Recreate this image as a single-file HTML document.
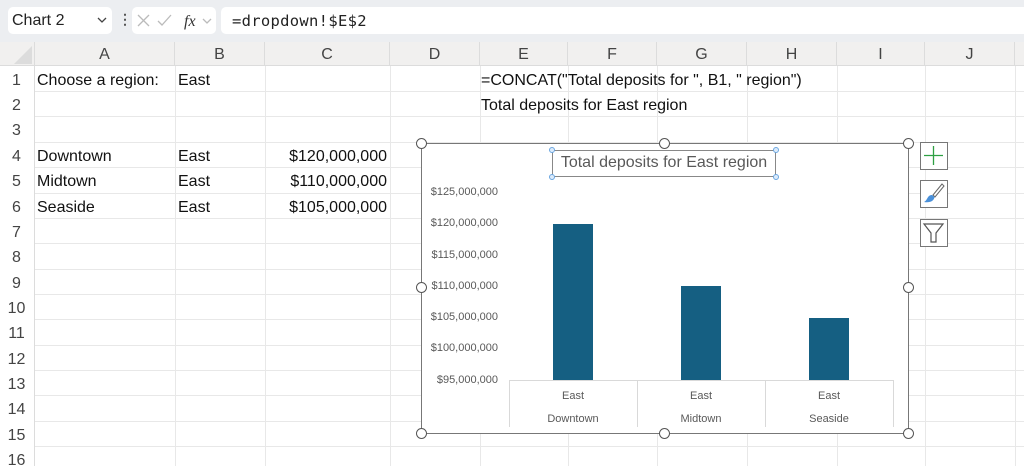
<!DOCTYPE html>
<html><head><meta charset="utf-8"><style>
*{margin:0;padding:0;box-sizing:border-box}
body{width:1024px;height:466px;overflow:hidden;background:#fff;font-family:"Liberation Sans",sans-serif;position:relative;color:#222}
.a{position:absolute}
.top{left:0;top:0;width:1024px;height:42px;background:#eceef1}
.box{background:#fff;border-radius:5px;height:27px;top:7px}
.hdr{left:0;top:42px;width:1024px;height:24px;background:#f1f0ef;border-bottom:1px solid #dcdcdc}
.ch{top:42px;height:24px;line-height:26px;text-align:center;font-size:16px;color:#444;border-right:1px solid #dcdcdc}
.rh{left:0;width:33px;text-align:center;font-size:16px;color:#444;height:25px;line-height:29px}
.hl{left:35px;width:989px;height:1px;background:#e8e8e8}
.vl{top:66px;width:1px;height:400px;background:#e8e8e8}
.t{font-size:16px;line-height:29px;height:25px;white-space:nowrap;color:#111}
.yl{font-size:11px;color:#595959;right:calc(1024px - 498px);text-align:right}
.h{width:11px;height:11px;border:1.5px solid #555;border-radius:50%;background:#fff}
.sh{width:6px;height:6px;border:1px solid #6aa6e0;border-radius:50%;background:#dcebfb}
.btn{left:920px;width:28px;height:28px;border:1.5px solid #777;background:#fff}
.bar{background:#155f82;width:40px}
.cx{font-size:11px;color:#595959;text-align:center;width:128px}
</style></head><body>
<div class="a top"></div>
<div class="a box" style="left:8px;width:104px"></div>
<div class="a" style="left:12px;top:10px;font-size:16px;line-height:22px">Chart 2</div>
<svg class="a" style="left:96px;top:15px" width="12" height="10"><path d="M2 3 L6 7 L10 3" stroke="#444" stroke-width="1.3" fill="none"/></svg>
<div class="a" style="left:118px;top:11px;font-size:14px;color:#555;font-weight:bold">&#8942;</div>
<div class="a box" style="left:132px;width:84px"></div>
<svg class="a" style="left:132px;top:7px" width="84" height="27"><g stroke="#bbb" stroke-width="1.3" fill="none"><path d="M6 8 L17 19 M17 8 L6 19"/><path d="M26 14 L30 18 L39 8"/><path d="M71 12 L75 16 L79 12"/></g><text x="52" y="19" font-family="Liberation Serif" font-style="italic" font-size="16" fill="#333">fx</text></svg>
<div class="a box" style="left:221px;width:803px;border-radius:5px 0 0 5px"></div>
<div class="a" style="left:232px;top:10px;line-height:22px;font-family:'DejaVu Sans Mono','Liberation Mono',monospace;font-size:15.5px;letter-spacing:0.3px">=dropdown!$E$2</div>
<div class="a hdr"></div>
<svg class="a" style="left:13px;top:44px" width="20" height="20"><path d="M19 2 L19 20 L1 20 Z" fill="#dcdcdc"/></svg>
<div class="a ch" style="left:35px;width:140px">A</div>
<div class="a ch" style="left:175px;width:90px">B</div>
<div class="a ch" style="left:265px;width:125px">C</div>
<div class="a ch" style="left:390px;width:90px">D</div>
<div class="a ch" style="left:480px;width:88px">E</div>
<div class="a ch" style="left:568px;width:89px">F</div>
<div class="a ch" style="left:657px;width:90px">G</div>
<div class="a ch" style="left:747px;width:90px">H</div>
<div class="a ch" style="left:837px;width:88px">I</div>
<div class="a ch" style="left:925px;width:90px">J</div>
<div class="a" style="left:34px;top:42px;width:1px;height:424px;background:#dcdcdc"></div>
<div class="a vl" style="left:175px"></div><div class="a vl" style="left:265px"></div><div class="a vl" style="left:390px"></div><div class="a vl" style="left:480px"></div><div class="a vl" style="left:568px"></div><div class="a vl" style="left:657px"></div><div class="a vl" style="left:747px"></div><div class="a vl" style="left:837px"></div><div class="a vl" style="left:925px"></div><div class="a vl" style="left:1015px"></div>
<div class="a hl" style="top:91px"></div><div class="a hl" style="top:116px"></div><div class="a hl" style="top:142px"></div><div class="a hl" style="top:167px"></div><div class="a hl" style="top:193px"></div><div class="a hl" style="top:218px"></div><div class="a hl" style="top:243px"></div><div class="a hl" style="top:269px"></div><div class="a hl" style="top:294px"></div><div class="a hl" style="top:319px"></div><div class="a hl" style="top:345px"></div><div class="a hl" style="top:370px"></div><div class="a hl" style="top:395px"></div><div class="a hl" style="top:421px"></div><div class="a hl" style="top:446px"></div>
<div class="a rh" style="top:66px">1</div><div class="a rh" style="top:91px">2</div><div class="a rh" style="top:116px">3</div><div class="a rh" style="top:142px">4</div><div class="a rh" style="top:167px">5</div><div class="a rh" style="top:193px">6</div><div class="a rh" style="top:218px">7</div><div class="a rh" style="top:243px">8</div><div class="a rh" style="top:269px">9</div><div class="a rh" style="top:294px">10</div><div class="a rh" style="top:319px">11</div><div class="a rh" style="top:345px">12</div><div class="a rh" style="top:370px">13</div><div class="a rh" style="top:395px">14</div><div class="a rh" style="top:421px">15</div><div class="a rh" style="top:446px">16</div>
<div class="a t" style="left:37px;top:66px">Choose a region:</div>
<div class="a t" style="left:178px;top:66px">East</div>
<div class="a t" style="left:481px;top:66px">=CONCAT("Total deposits for ", B1, " region")</div>
<div class="a t" style="left:481px;top:91px">Total deposits for East region</div>
<div class="a t" style="left:37px;top:142px">Downtown</div><div class="a t" style="left:178px;top:142px">East</div><div class="a t" style="left:265px;top:142px;width:122px;text-align:right">$120,000,000</div>
<div class="a t" style="left:37px;top:167px">Midtown</div><div class="a t" style="left:178px;top:167px">East</div><div class="a t" style="left:265px;top:167px;width:122px;text-align:right">$110,000,000</div>
<div class="a t" style="left:37px;top:193px">Seaside</div><div class="a t" style="left:178px;top:193px">East</div><div class="a t" style="left:265px;top:193px;width:122px;text-align:right">$105,000,000</div>
<div class="a" style="left:421px;top:143px;width:488px;height:291px;background:#fff;border:1.5px solid #777"></div>
<div class="a" style="left:552px;top:150px;width:224px;height:27px;border:1px solid #888"></div>
<div class="a" style="left:552px;top:154px;width:224px;text-align:center;font-size:16px;color:#595959">Total deposits for East region</div>
<div class="a sh" style="left:549px;top:147px"></div><div class="a sh" style="left:773px;top:147px"></div><div class="a sh" style="left:549px;top:174px"></div><div class="a sh" style="left:773px;top:174px"></div>
<div class="a yl" style="top:186px">$125,000,000</div>
<div class="a yl" style="top:217px">$120,000,000</div>
<div class="a yl" style="top:249px">$115,000,000</div>
<div class="a yl" style="top:280px">$110,000,000</div>
<div class="a yl" style="top:311px">$105,000,000</div>
<div class="a yl" style="top:342px">$100,000,000</div>
<div class="a yl" style="top:374px">$95,000,000</div>
<div class="a bar" style="left:553px;top:224px;height:156px"></div>
<div class="a bar" style="left:681px;top:286px;height:94px"></div>
<div class="a bar" style="left:809px;top:318px;height:62px"></div>
<div class="a" style="left:509px;top:380px;width:384px;height:1px;background:#d9d9d9"></div>
<div class="a" style="left:509px;top:380px;width:1px;height:47px;background:#d9d9d9"></div>
<div class="a" style="left:637px;top:380px;width:1px;height:47px;background:#d9d9d9"></div>
<div class="a" style="left:765px;top:380px;width:1px;height:47px;background:#d9d9d9"></div>
<div class="a" style="left:893px;top:380px;width:1px;height:47px;background:#d9d9d9"></div>
<div class="a cx" style="left:509px;top:390px">East</div><div class="a cx" style="left:637px;top:390px">East</div><div class="a cx" style="left:765px;top:390px">East</div>
<div class="a cx" style="left:509px;top:413px">Downtown</div><div class="a cx" style="left:637px;top:413px">Midtown</div><div class="a cx" style="left:765px;top:413px">Seaside</div>
<div class="a h" style="left:416px;top:138px"></div><div class="a h" style="left:659px;top:138px"></div><div class="a h" style="left:903px;top:138px"></div>
<div class="a h" style="left:416px;top:282px"></div><div class="a h" style="left:903px;top:282px"></div>
<div class="a h" style="left:416px;top:428px"></div><div class="a h" style="left:659px;top:428px"></div><div class="a h" style="left:903px;top:428px"></div>
<div class="a btn" style="top:142px"><svg width="25" height="25"><path d="M12.5 3 V22 M3 12.5 H22" stroke="#2ea043" stroke-width="1.3"/></svg></div>
<div class="a btn" style="top:180px"><svg width="25" height="25"><path d="M21 3 L12 14 L14 16 L23 5 Z" fill="#fff" stroke="#666" stroke-width="1"/><path d="M11 14 C6 14 7 19 3 21 C9 22 13 20 13.5 16 Z" fill="#4a90d9"/></svg></div>
<div class="a btn" style="top:219px"><svg width="25" height="25"><path d="M3 4 H22 L15 13 V22 H10 V13 Z" fill="none" stroke="#555" stroke-width="1.2"/></svg></div>
</body></html>
